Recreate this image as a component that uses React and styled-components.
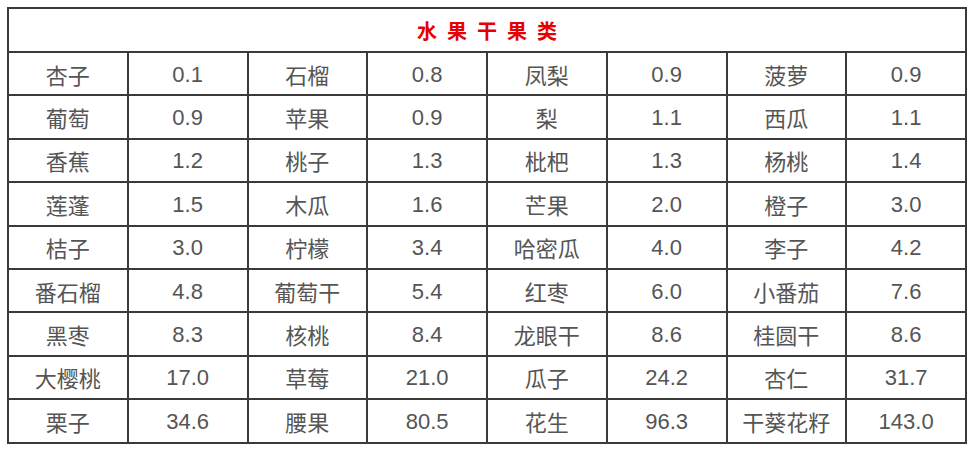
import React from "react";
import styled, { createGlobalStyle } from "styled-components";

const GlobalStyle = createGlobalStyle`
  html, body {
    margin: 0;
    padding: 0;
    background: #ffffff;
  }
  body {
    font-family: "Liberation Sans", "Noto Sans CJK SC", sans-serif;
  }
`;

const Page = styled.div`
  padding: 7px 0 0 7px;
`;

const Table = styled.div`
  width: 960px;
  display: grid;
  grid-template-columns: repeat(8, 1fr);
  grid-template-rows: 44px;
  grid-auto-rows: 43.4px;
  border-top: 2px solid #3a3a3a;
  border-left: 2px solid #3a3a3a;
  box-sizing: border-box;
`;

const Title = styled.div`
  grid-column: 1 / -1;
  display: flex;
  align-items: center;
  justify-content: center;
  border-right: 2px solid #3a3a3a;
  border-bottom: 2px solid #3a3a3a;
  color: #e60000;
  font-family: "Noto Sans CJK SC", sans-serif;
  font-weight: 700;
  font-size: 20px;
  letter-spacing: 10px;
  padding-left: 10px;
`;

const Cell = styled.div`
  display: flex;
  align-items: center;
  justify-content: center;
  border-right: 2px solid #3a3a3a;
  border-bottom: 2px solid #3a3a3a;
  color: #555555;
  font-family: "Liberation Sans", "Noto Sans CJK SC", sans-serif;
  font-size: 22px;
  white-space: nowrap;
  padding-top: ${(p) => (p.$num ? "2px" : "0")};
`;

const rows = [
  ["杏子", "0.1", "石榴", "0.8", "凤梨", "0.9", "菠萝", "0.9"],
  ["葡萄", "0.9", "苹果", "0.9", "梨", "1.1", "西瓜", "1.1"],
  ["香蕉", "1.2", "桃子", "1.3", "枇杷", "1.3", "杨桃", "1.4"],
  ["莲蓬", "1.5", "木瓜", "1.6", "芒果", "2.0", "橙子", "3.0"],
  ["桔子", "3.0", "柠檬", "3.4", "哈密瓜", "4.0", "李子", "4.2"],
  ["番石榴", "4.8", "葡萄干", "5.4", "红枣", "6.0", "小番茄", "7.6"],
  ["黑枣", "8.3", "核桃", "8.4", "龙眼干", "8.6", "桂圆干", "8.6"],
  ["大樱桃", "17.0", "草莓", "21.0", "瓜子", "24.2", "杏仁", "31.7"],
  ["栗子", "34.6", "腰果", "80.5", "花生", "96.3", "干葵花籽", "143.0"],
];

export default function App() {
  return (
    <>
      <GlobalStyle />
      <Page>
        <Table>
          <Title>水果干果类</Title>
          {rows.flatMap((row, r) =>
            row.map((v, c) => (
              <Cell key={`${r}-${c}`} $num={c % 2 === 1}>
                {v}
              </Cell>
            ))
          )}
        </Table>
      </Page>
    </>
  );
}
